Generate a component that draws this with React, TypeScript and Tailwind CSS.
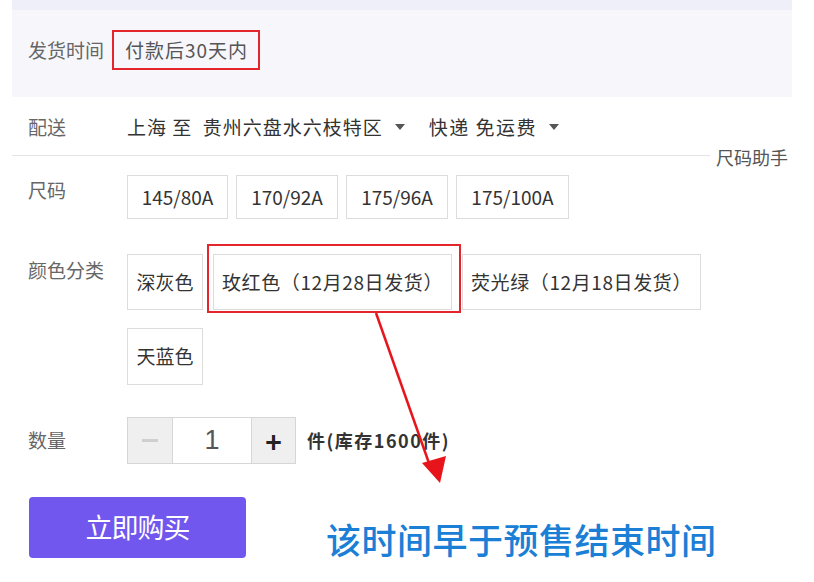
const sizes = [
  { label: '145/80A', w: 'w-[101px]' },
  { label: '170/92A', w: 'w-[102px]' },
  { label: '175/96A', w: 'w-[102px]' },
  { label: '175/100A', w: 'w-[113px]' },
];

function Caret() {
  return <span className="ml-[12px] inline-block border-x-[5px] border-t-[6px] border-x-transparent border-t-[#555] align-middle" />;
}

export default function App() {
  return (
    <div
      className="relative w-[814px] h-[582px] overflow-hidden bg-white text-[#333]"
      style={{ fontFamily: '"Noto Sans CJK SC", "Noto Sans", sans-serif' }}
    >
      {/* Shipping time panel */}
      <div className="ml-[12px] w-[780px] h-[97px] bg-[#f7f7fb]">
        <div className="h-[10px] bg-[#efeffa]" />
        <div className="flex items-center pl-[16px] mt-[20px]">
          <span className="text-[19px] leading-[22px] text-[#666]">发货时间</span>
          <div className="ml-[8px] h-[40px] flex items-center pl-[11px] pr-[10px] border-2 border-[#e3262b]">
            <span className="text-[19px] leading-[22px] tracking-[1px] text-[#555]">付款后30天内</span>
          </div>
        </div>
      </div>

      {/* Delivery */}
      <div className="flex items-center h-[50px] pt-[10px] pl-[28px]">
        <span className="w-[99px] text-[19px] text-[#666]">配送</span>
        <span className="flex items-center text-[19px] tracking-[1px] text-[#333]">
          上海 至&nbsp; 贵州六盘水六枝特区
          <Caret />
        </span>
        <span className="ml-[24px] flex items-center text-[19px] tracking-[1.5px] text-[#333]">
          快递 免运费
          <Caret />
        </span>
      </div>

      {/* Divider + size helper */}
      <div className="flex items-start h-[20px] pl-[12px] pr-[26px]">
        <div className="flex-1 h-px mt-[8px] bg-[#e4e4e4]" />
        <span className="ml-[6px] text-[18px] leading-[20px] text-[#555]">尺码助手</span>
      </div>

      {/* Sizes */}
      <div className="flex items-start mt-[8px] pl-[28px]">
        <span className="w-[99px] pt-[5px] text-[19px] leading-[20px] text-[#666]">尺码</span>
        <div className="flex gap-[8px]">
          {sizes.map((s) => (
            <div
              key={s.label}
              className={`${s.w} h-[44px] flex items-center justify-center border border-[#dcdcdc] bg-white text-[19px] text-[#333]`}
            >
              {s.label}
            </div>
          ))}
        </div>
      </div>

      {/* Colors */}
      <div className="flex items-start mt-[35px] pl-[28px]">
        <span className="w-[99px] pt-[6px] text-[19px] leading-[20px] text-[#666]">颜色分类</span>
        <div className="w-[600px] flex flex-wrap gap-x-[10px] gap-y-[18px]">
          <div className="w-[76px] h-[56px] flex items-center justify-center border border-[#dcdcdc] text-[19px]">深灰色</div>
          <div className="relative w-[239px] h-[56px] flex items-center pl-[8px] border border-[#dcdcdc] text-[19px] tracking-[0.6px]">
            玫红色（12月28日发货）
            <div className="absolute -top-[11px] -left-[7px] -right-[10px] -bottom-[4px] border-2 border-[#e3262b]" />
          </div>
          <div className="w-[239px] h-[56px] flex items-center pl-[8px] border border-[#dcdcdc] text-[19px] tracking-[0.6px]">荧光绿（12月18日发货）</div>
          <div className="w-[76px] h-[57px] flex items-center justify-center border border-[#dcdcdc] text-[19px]">天蓝色</div>
        </div>
      </div>

      {/* Quantity */}
      <div className="flex items-center mt-[32px] pl-[28px]">
        <span className="w-[99px] text-[19px] text-[#666]">数量</span>
        <div className="flex h-[47px] border border-[#d6d6d6]">
          <div className="w-[44px] flex items-center justify-center bg-[#efefef]">
            <div className="w-[16px] h-[3px] bg-[#cfcfcf]" />
          </div>
          <div className="w-[80px] flex items-center justify-center bg-white border-x border-[#d6d6d6] text-[27px] text-[#555]" style={{ fontFamily: '"Liberation Sans", sans-serif' }}>
            1
          </div>
          <div className="w-[43px] flex items-center justify-center bg-[#efefef] text-[28px] font-bold text-[#222]">+</div>
        </div>
        <span className="ml-[11px] text-[18px] font-bold tracking-[1.5px] text-[#333]">件(库存1600件)</span>
      </div>

      {/* Buy */}
      <div className="flex items-start mt-[33px] pl-[29px]">
        <button className="w-[217px] h-[61px] rounded-[4px] bg-[#7157ee] text-white text-[27px] tracking-[-1px]">立即购买</button>
        <span className="ml-[80px] mt-[22px] text-[35px] leading-[40px] font-medium text-[#1b7fd6] tracking-[0.5px]">
          该时间早于预售结束时间
        </span>
      </div>

      {/* Annotation arrow */}
      <svg className="absolute left-0 top-0 pointer-events-none" width="814" height="582">
        <line x1="376" y1="313" x2="430" y2="466" stroke="#e8141b" strokeWidth="2.5" />
        <polygon points="440,483 422,463 446,456" fill="#e8141b" />
      </svg>
    </div>
  );
}
